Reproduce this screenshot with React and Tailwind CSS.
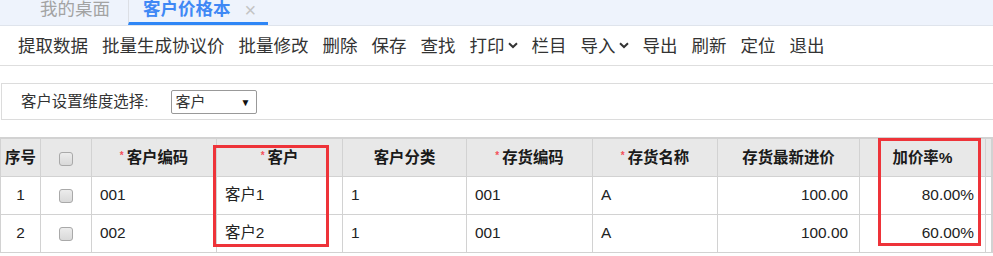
import { useState } from "react";

const FONT = { fontFamily: '"Liberation Sans", "Noto Sans CJK SC", sans-serif' };

const toolbar = [
	{ label: "提取数据" },
	{ label: "批量生成协议价" },
	{ label: "批量修改" },
	{ label: "删除" },
	{ label: "保存" },
	{ label: "查找" },
	{ label: "打印", menu: true },
	{ label: "栏目" },
	{ label: "导入", menu: true },
	{ label: "导出" },
	{ label: "刷新" },
	{ label: "定位" },
	{ label: "退出" },
];

const columns = [
	{ key: "no", title: "序号", width: 40 },
	{ key: "check", title: "", width: 51 },
	{ key: "code", title: "客户编码", width: 125, required: true },
	{ key: "customer", title: "客户", width: 126, required: true },
	{ key: "category", title: "客户分类", width: 124 },
	{ key: "stockCode", title: "存货编码", width: 126, required: true },
	{ key: "stockName", title: "存货名称", width: 125, required: true },
	{ key: "price", title: "存货最新进价", width: 142, right: true },
	{ key: "rate", title: "加价率%", width: 126, right: true },
];

const rows = [
	{ no: 1, code: "001", customer: "客户1", category: "1", stockCode: "001", stockName: "A", price: "100.00", rate: "80.00%" },
	{ no: 2, code: "002", customer: "客户2", category: "1", stockCode: "001", stockName: "A", price: "100.00", rate: "60.00%" },
];

function Chevron() {
	return (
		<svg width="10" height="7" viewBox="0 0 10 7" className="ml-[3px]">
			<path d="M1 1.2 L5 5 L9 1.2" fill="none" stroke="#333" strokeWidth="2" />
		</svg>
	);
}

function Checkbox() {
	return (
		<span className="inline-block w-[14px] h-[14px] rounded-[3px] border border-[#a9a9a9] bg-gradient-to-b from-[#ececec] to-[#d9d9d9] align-middle" />
	);
}

export default function App() {
	const [dimension, setDimension] = useState("客户");

	return (
		<div className="relative w-[993px] h-[256px] overflow-hidden bg-white text-[#333]" style={FONT}>
			{/* tabs */}
			<div className="flex h-[26px] bg-[#eef3fc] border-b border-[#dfe4ec]">
				<div className="w-[128px] pl-[40px] text-[17.5px] leading-[18px] text-[#a3a3a3]">我的桌面</div>
				<div className="flex items-start h-[25px] pl-[14px] pr-[12px] border-l border-[#dcdfe5] border-b-[3px] border-b-[#2e86f6]">
					<span className="text-[17.5px] leading-[18px] font-bold text-[#3f88f5]">客户价格本</span>
					<span className="ml-[14px] text-[20px] leading-[20px] font-light text-[#c4c4c4]">×</span>
				</div>
			</div>

			{/* toolbar */}
			<div className="flex items-center h-[40px] pl-[18px] gap-[14px] border-b border-[#dedede]">
				{toolbar.map((item) => (
					<div key={item.label} className="flex items-center text-[17.5px] leading-[20px] text-[#333] cursor-pointer">
						{item.label}
						{item.menu && <Chevron />}
					</div>
				))}
			</div>

			{/* filter */}
			<div className="mt-[17px] ml-[1px] h-[37px] flex items-center border-t border-b border-l border-[#dcdcdc] pl-[19px]">
				<span className="text-[15.4px] text-[#333]">客户设置维度选择:</span>
				<div className="relative ml-[23px] w-[86px] h-[24px] border border-[#999] rounded-[2px] bg-white flex items-center">
					<select
						value={dimension}
						onChange={(e) => setDimension(e.target.value)}
						className="appearance-none w-full h-full pl-[3px] text-[15px] leading-[20px] bg-transparent outline-none"
						style={FONT}
					>
						<option>客户</option>
						<option>客户分类</option>
					</select>
					<span className="absolute right-[6px] top-[4px] text-[10px] text-[#111] pointer-events-none">▼</span>
				</div>
			</div>

			{/* table */}
			<table className="mt-[17px] table-fixed border-collapse w-[993px] text-[15.4px]">
				<colgroup>
					{columns.map((c) => (
						<col key={c.key} style={{ width: c.width }} />
					))}
					<col style={{ width: 6 }} />
					<col />
				</colgroup>
				<thead>
					<tr className="h-[38px] bg-[#e8e8e8] border-t-2 border-[#d2d2d2]">
						{columns.map((c) => (
							<th key={c.key} className="border border-[#d2d2d2] border-t-2 font-bold text-[#1a1a1a] text-center p-0 whitespace-nowrap">
								{c.key === "check" ? (
									<Checkbox />
								) : (
									<>
										{c.required && <span className="text-[#f4505a] text-[10px] align-top relative top-[2px] mr-[3px]">*</span>}
										{c.title}
									</>
								)}
							</th>
						))}
						<th className="border border-[#d2d2d2] border-t-2 p-0" />
						<th className="border border-[#d2d2d2] border-t-2 p-0" />
					</tr>
				</thead>
				<tbody>
					{rows.map((r) => (
						<tr key={r.no} className="h-[38px]">
							{columns.map((c) => (
								<td
									key={c.key}
									className={
										"border border-[#d2d2d2] p-0 text-[#222] whitespace-nowrap " +
										(c.key === "no" || c.key === "check"
											? "text-center"
											: c.right
												? "text-right pr-[11px]"
												: "text-left pl-[8px]")
									}
								>
									{c.key === "check" ? <Checkbox /> : r[c.key]}
								</td>
							))}
							<td className="border border-[#d2d2d2] p-0" />
							<td className="border border-[#d2d2d2] p-0" />
						</tr>
					))}
				</tbody>
			</table>

			{/* red highlight boxes */}
			<div className="absolute left-[213px] top-[145px] w-[116px] h-[102px] border-[3px] border-[#ee3339] pointer-events-none" />
			<div className="absolute left-[878px] top-[138px] w-[103px] h-[108px] border-[3px] border-[#ee3339] pointer-events-none" />
		</div>
	);
}
